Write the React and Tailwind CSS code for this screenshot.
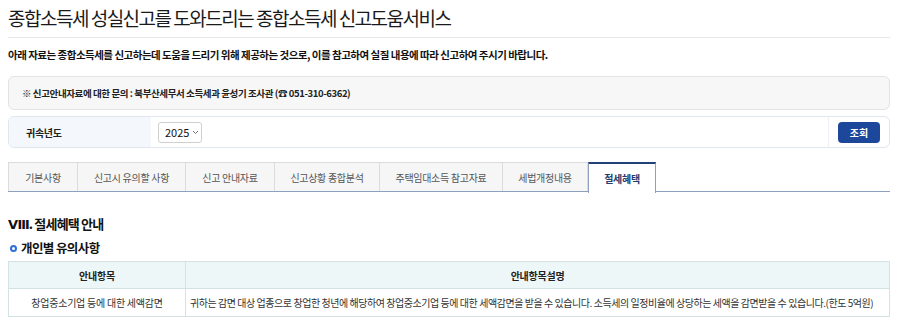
const TABS = [
  { label: "기본사항", w: "w-[70px]" },
  { label: "신고시 유의할 사항", w: "w-[108px]" },
  { label: "신고 안내자료", w: "w-[89px]" },
  { label: "신고상황 종합분석", w: "w-[105px]" },
  { label: "주택임대소득 참고자료", w: "w-[123px]" },
  { label: "세법개정내용", w: "w-[85px]" },
  { label: "절세혜택", w: "w-[68px]" },
];

export default function App() {
  const active = 6;

  return (
    <div
      className="w-[900px] h-[323px] overflow-hidden bg-white px-2 text-[#222]"
      style={{ fontFamily: "'Noto Sans CJK KR', 'Noto Sans', sans-serif" }}
    >
      {/* 제목 */}
      <h1 className="pt-[6px] pb-[7px] mr-[2px] text-[19px] leading-[24px] font-normal tracking-[-1.5px] text-[#1a1a1a] border-b border-[#e8e8e8]">
        종합소득세 성실신고를 도와드리는 종합소득세 신고도움서비스
      </h1>

      <p className="mt-[10px] text-[10.5px] leading-[14px] font-bold tracking-[-0.5px] text-[#111]">
        아래 자료는 종합소득세를 신고하는데 도움을 드리기 위해 제공하는 것으로, 이를 참고하여 실질 내용에 따라 신고하여 주시기 바랍니다.
      </p>

      {/* 문의 안내 */}
      <div className="mt-[14px] mr-[2px] h-[34px] flex items-center px-[13px] bg-[#f7f7f7] border border-[#e3e3e3] rounded-[6px] text-[9.5px] font-bold tracking-[-0.4px] text-[#222]">
        ※ 신고안내자료에 대한 문의 : 북부산세무서 소득세과 윤성기 조사관 (☎ 051-310-6362)
      </div>

      {/* 조회 조건 */}
      <div className="mt-[6px] mr-[2px] h-[32px] flex border border-[#dfe6ee] rounded-[6px] overflow-hidden">
        <div className="w-[142px] bg-[#f4f8fc] flex items-center pl-[17px] text-[10px] font-bold tracking-[-0.3px] text-[#222]">
          귀속년도
        </div>
        <div className="flex-1 flex items-center pl-[7px]">
          <div className="h-[21px] w-[44px] pl-[6px] flex items-center gap-[3px] border border-[#cfcfcf] rounded-[3px] text-[11px] text-[#111]">
            2025
            <svg width="7" height="5" viewBox="0 0 7 5" className="mt-[1px]">
              <path d="M1 1l2.5 2.5L6 1" fill="none" stroke="#777" strokeWidth="1" />
            </svg>
          </div>
        </div>
        <div className="w-[61px] border-l border-[#edf0f4] flex items-center justify-center">
          <button className="w-[42px] h-[21px] rounded-[4px] bg-[#1c479b] text-white text-[10px] font-bold">
            조회
          </button>
        </div>
      </div>

      {/* 탭 */}
      <div className="mt-[14px] mr-[2px] flex border-b border-[#8ea0bd] h-[30px]">
        {TABS.map((t, i) =>
          i === active ? (
            <div
              key={t.label}
              className={
                t.w +
                " relative -mb-px h-[31px] flex items-center justify-center bg-white border-t-2 border-t-[#213f78] border-x border-x-[#8ea0bd] text-[10px] font-bold tracking-[-0.3px] text-[#243b6e]"
              }
            >
              {t.label}
            </div>
          ) : (
            <div
              key={t.label}
              className={
                t.w +
                " h-[29px] self-end flex items-center justify-center bg-[#f6f6f6] border-t border-r border-[#dcdcdc] text-[10px] tracking-[-0.3px] text-[#555] " +
                (i === 0 ? "border-l" : "")
              }
            >
              {t.label}
            </div>
          )
        )}
      </div>

      {/* 절세혜택 안내 */}
      <h2 className="mt-[23px] text-[13px] leading-[18px] font-bold tracking-[-0.8px] text-[#111]">
        <span style={{ fontFamily: "'DejaVu Sans', sans-serif" }} className="tracking-[-1px]">Ⅷ</span>. 절세혜택 안내
      </h2>
      <h3 className="mt-[5px] flex items-center gap-[4px] text-[12.5px] leading-[18px] font-bold tracking-[-0.6px] text-[#111]">
        <span className="ml-[2px] w-[7px] h-[7px] rounded-full border-2 border-[#2f6fd6]" />
        개인별 유의사항
      </h3>

      <table className="mt-[4px] w-[882px] border-collapse text-[10px] tracking-[-0.25px] text-[#333]">
        <thead>
          <tr className="bg-[#eef7f7] h-[27px]">
            <th className="w-[177px] border border-[#d3e3e3] font-bold text-[#222]">안내항목</th>
            <th className="border border-[#d3e3e3] font-bold text-[#222]">안내항목설명</th>
          </tr>
        </thead>
        <tbody>
          <tr className="h-[28px]">
            <td className="border border-[#d3e3e3] text-center">창업중소기업 등에 대한 세액감면</td>
            <td className="border border-[#d3e3e3] pl-[4px] whitespace-nowrap tracking-[-0.45px]">
              귀하는 감면 대상 업종으로 창업한 청년에 해당하여 창업중소기업 등에 대한 세액감면을 받을 수 있습니다. 소득세의 일정비율에 상당하는 세액을 감면받을 수 있습니다.(한도 5억원)
            </td>
          </tr>
        </tbody>
      </table>
    </div>
  );
}
